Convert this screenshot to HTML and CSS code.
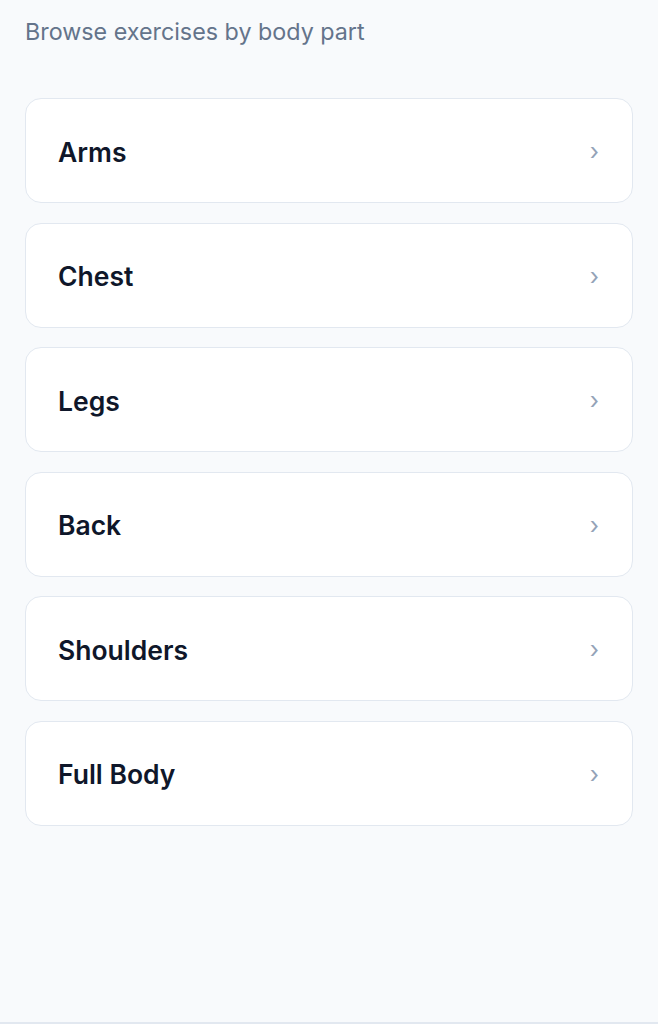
FILE: index.html
```html
<!DOCTYPE html>
<html lang="en">
<head>
    <meta charset="UTF-8">
    <meta name="viewport" content="width=device-width, initial-scale=1.0">
    <title>Body Parts</title>
    <link rel="stylesheet" href="styles.css">
</head>
<body>
    <div class="page">
        <p class="subtitle">Browse exercises by body part</p>
        <div class="list">
            <a class="card" href="#"><span class="name">Arms</span><span class="chevron">›</span></a>
            <a class="card" href="#"><span class="name">Chest</span><span class="chevron">›</span></a>
            <a class="card" href="#"><span class="name">Legs</span><span class="chevron">›</span></a>
            <a class="card" href="#"><span class="name">Back</span><span class="chevron">›</span></a>
            <a class="card" href="#"><span class="name">Shoulders</span><span class="chevron">›</span></a>
            <a class="card" href="#"><span class="name">Full Body</span><span class="chevron">›</span></a>
        </div>
    </div>
    <div class="tabbar"></div>
</body>
</html>
```

FILE: styles.css
```css
html, body {
    margin: 0;
    height: 100%;
}

body {
    font-family: Inter, "Noto Sans", sans-serif;
    background-color: #f8fafc;
    color: #0f172a;
    display: flex;
    flex-direction: column;
}

.page {
    flex: 1;
    padding: 16px 25px 0 25px;
}

.subtitle {
    margin: 0;
    font-size: 23.3px;
    line-height: 32px;
    color: #64748b;
}

.list {
    display: flex;
    flex-direction: column;
    gap: 19.6px;
    margin-top: 50px;
}

.card {
    display: flex;
    align-items: center;
    justify-content: space-between;
    height: 103px;
    padding: 0 33px 0 32px;
    background-color: #fff;
    border: 1px solid #e2e8f0;
    border-radius: 16px;
    text-decoration: none;
    color: inherit;
}

.name {
    font-size: 26.5px;
    font-weight: 600;
    margin-top: 2px;
}

.chevron {
    font-size: 24px;
    color: #94a3b8;
    line-height: 1;
    margin-top: 3px;
}

.tabbar {
    height: 2px;
    background-color: #e2e8f0;
}
```
